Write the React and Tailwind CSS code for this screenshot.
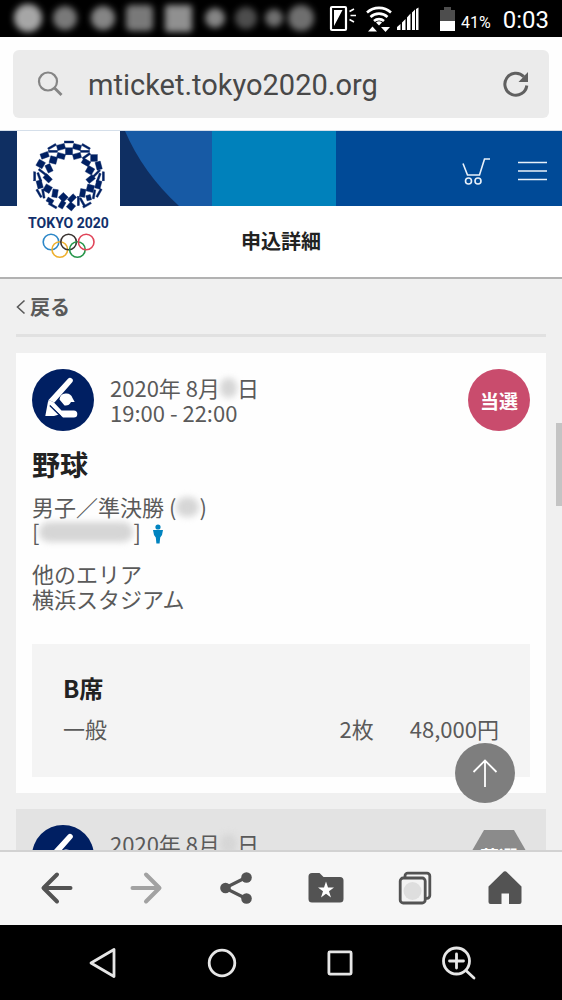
const SMUDGES = [
  { x: 28, r: 14, o: 0.75 },
  { x: 65, r: 12, o: 0.55 },
  { x: 103, r: 12, o: 0.6 },
  { x: 215, r: 10, o: 0.6 },
  { x: 246, r: 11, o: 0.35 },
  { x: 274, r: 9, o: 0.5 },
  { x: 301, r: 13, o: 0.5 },
];

// [centre x, centre y, width, height, rotation]
const TILES = [
  [205, 51, 28, 6, 0], [205, 79, 21, 21, 0], [181, 66, 24, 16, -15], [229, 66, 24, 16, 15],
  [154, 65, 27, 6, -30], [157, 79, 27, 6, 0], [256, 65, 27, 6, 30], [253, 79, 27, 6, 0],
  [132, 91, 24, 16, -20], [158, 105, 21, 21, 15], [181, 93, 24, 16, 15], [229, 93, 24, 16, -15],
  [257, 93, 27, 6, -35], [280, 99, 20, 20, 0], [256, 112, 24, 16, 30],
  [120, 117, 21, 21, 30], [145, 130, 24, 16, 65], [294, 122, 24, 16, 75], [268, 136, 21, 21, 30],
  [102, 154, 6, 27, 0], [116, 156, 6, 27, -20], [125, 141, 27, 6, 38], [141, 160, 24, 16, 45],
  [308, 154, 6, 27, 0], [294, 158, 6, 27, 20], [288, 145, 6, 27, 45], [270, 162, 24, 16, -40],
  [117, 178, 16, 24, -15], [141, 191, 21, 21, 30], [115, 205, 6, 27, -30], [128, 206, 6, 27, -10],
  [293, 179, 16, 24, 15], [269, 190, 21, 21, 15], [295, 204, 6, 27, 30], [280, 208, 6, 27, 10],
  [163, 205, 16, 24, 10], [148, 227, 20, 13, 30], [188, 217, 21, 21, 45], [156, 242, 27, 6, 30],
  [184, 239, 22, 15, -60], [211, 244, 20, 20, 40], [214, 220, 24, 15, -45], [233, 228, 6, 28, 0],
  [246, 204, 16, 24, 10], [245, 231, 6, 27, -30], [259, 240, 27, 6, -30], [264, 218, 14, 16, -15],
];

function Emblem() {
  return (
    <svg viewBox="97 45 216 216" className="block h-[72px] w-[72px]" fill="#002063" stroke="#002063" strokeWidth="1.200" aria-hidden="true">
      {TILES.map(([x, y, w, h, a], i) => (
        <rect key={i} x={x - w / 2} y={y - h / 2} width={w} height={h} transform={`rotate(${a} ${x} ${y})`} />
      ))}
    </svg>
  );
}

function Rings() {
  return (
    <svg viewBox="0 0 54 26" className="block h-[26px] w-[54px]" fill="none" strokeWidth="1.600" aria-hidden="true">
      <circle cx="9" cy="9" r="7.800" stroke="#2c87c8" />
      <circle cx="17.800" cy="16.500" r="7.800" stroke="#efb02e" />
      <circle cx="26.600" cy="9" r="7.800" stroke="#3a3330" />
      <circle cx="35.400" cy="16.500" r="7.800" stroke="#26964a" />
      <circle cx="44.200" cy="9" r="7.800" stroke="#e04458" />
    </svg>
  );
}

function StatusBar() {
  return (
    <div className="flex h-[37px] shrink-0 items-center bg-black pr-[13px] text-white">
      <svg viewBox="0 0 316 37" className="h-[37px] w-[316px] shrink-0 overflow-visible" aria-hidden="true">
        <defs>
          <filter id="soft" x="-30%" y="-30%" width="160%" height="160%">
            <feGaussianBlur stdDeviation="3.2" />
          </filter>
        </defs>
        <g filter="url(#soft)" fill="#ddd">
          {SMUDGES.map((s) => (
            <circle key={s.x} cx={s.x} cy="18" r={s.r} opacity={s.o} />
          ))}
          <rect x="126" y="5" width="27" height="26" rx="5" opacity=".55" />
          <rect x="165" y="5" width="27" height="27" rx="3" opacity=".65" />
        </g>
      </svg>
      <svg viewBox="0 0 134 37" className="ml-auto h-[37px] w-[134px] shrink-0" aria-hidden="true">
        <rect x="8" y="7" width="15" height="23" rx="1" fill="none" stroke="#fff" strokeWidth="2.200" />
        <path d="M11 10h8.500L11 26z" fill="#fff" />
        <path d="M26.500 11.500l4.500-2.500M27.500 15.500h5.500M26.500 19.500l4.500 2.500" stroke="#fff" strokeWidth="1.600" />
        <g fill="none" stroke="#fff" strokeWidth="2.600">
          <path d="M44 12.500a18 18 0 0 1 24 0" />
          <path d="M47.500 17a12.500 12.500 0 0 1 17 0" />
          <path d="M51 21a7.500 7.500 0 0 1 10 0" />
        </g>
        <path d="M53 22.500a4.500 4.500 0 0 1 6 0l-3 3z" fill="#fff" />
        <path d="M45 31.500l4.500-5 4.500 5zM58 27h9l-4.500 5z" fill="#fff" />
        <path d="M74 30V27l3.500-3v6zM79 30v-7.500l3.500-3.500v11zM84 30V17.500l3.500-4V30zM89 30V12.500l3-3V30zM93 30V9l2.500-1.500V30z" fill="#fff" />
        <path d="M117 10h4V7h7v3h4v11h-15z" fill="#4d4d4d" />
        <path d="M117 21h15v10h-15z" fill="#fff" />
      </svg>
      <span className="ml-1 mt-2 font-['Roboto',sans-serif] text-[16px] leading-none">41%</span>
      <span className="ml-3 mt-[2px] font-['Roboto',sans-serif] text-[24px] leading-none">0:03</span>
    </div>
  );
}

function AddressBar() {
  return (
    <div className="shrink-0 border-b border-[#d5dfea] bg-[#fefefe] px-[13px] pt-[13px] pb-3">
      <div className="flex h-[68px] items-center rounded-md bg-[#ebebeb] pr-5 pl-6">
        <svg viewBox="0 0 26 26" className="h-[26px] w-[26px] shrink-0" fill="none" stroke="#858585" strokeWidth="2.200" aria-hidden="true">
          <circle cx="11" cy="10.500" r="9" />
          <path d="M17.500 17l7 7" strokeWidth="2.800" />
        </svg>
        <input
          aria-label="URL"
          defaultValue="mticket.tokyo2020.org"
          className="ml-[25px] min-w-0 flex-1 bg-transparent pt-1 font-['Roboto',sans-serif] text-[29px] text-[#484848] outline-none"
        />
        <button type="button" aria-label="再読み込み" className="shrink-0">
          <svg viewBox="0 0 26 26" className="block h-[26px] w-[26px]" aria-hidden="true">
            <path d="M20.800 5.600A11 11 0 1 0 23.800 14.500" fill="none" stroke="#606060" strokeWidth="3" />
            <path d="M25 1v10H15.500z" fill="#606060" />
          </svg>
        </button>
      </div>
    </div>
  );
}

function SiteHeader() {
  return (
    <header className="relative shrink-0 border-b-2 border-[#b2b2b2] bg-white">
      <div className="flex h-[75px] bg-[#004a97]">
        <svg viewBox="0 0 212 75" className="h-[75px] w-[212px] shrink-0" aria-hidden="true">
          <path d="M0 0h212v75H0z" fill="#0f2f62" />
          <path d="M125 0H212V75H179Q143 42 125 0z" fill="#175aa5" />
        </svg>
        <div className="w-[124px] shrink-0 bg-[#0081bb]" />
        <div className="flex flex-1 items-center justify-end gap-[26px] pr-[15px]">
          <button type="button" aria-label="カート" className="mt-1">
            <svg viewBox="0 0 30 30" className="block h-[30px] w-[30px]" fill="none" stroke="#e8f1fa" strokeWidth="1.600" aria-hidden="true">
              <path d="M2 7.500L6.500 19H18.500L23.500 3H29" />
              <circle cx="7.500" cy="25" r="3" />
              <circle cx="17" cy="25" r="3" />
            </svg>
          </button>
          <button type="button" aria-label="メニュー" className="mt-1">
            <svg viewBox="0 0 30 20" className="block h-5 w-[30px]" stroke="#e8f1fa" strokeWidth="1.600" aria-hidden="true">
              <path d="M1 1.500h29M1 10h29M1 18.500h29" />
            </svg>
          </button>
        </div>
      </div>
      <h1 className="flex h-[71px] items-center justify-center pb-[2px] text-[20px] font-bold text-[#222]">申込詳細</h1>
      <a href="#top" className="absolute top-0 left-[17px] flex h-[135px] w-[103px] flex-col items-center bg-white pt-[9px]">
        <Emblem />
        <span className="mt-[2px] font-['Roboto',sans-serif] text-[14px] leading-[18px] font-bold whitespace-nowrap text-[#12306c]">TOKYO 2020</span>
        <span className="mt-px">
          <Rings />
        </span>
      </a>
    </header>
  );
}

function BaseballIcon() {
  return (
    <svg viewBox="0 0 62 62" className="h-[62px] w-[62px] shrink-0" aria-hidden="true">
      <circle cx="31" cy="31" r="31" fill="#001f62" />
      <path d="M36 9.800a2.700 2.700 0 0 1 4.200 3.400L22.500 33.500 16.500 31z" fill="#fff" />
      <path d="M27.500 30.500a6.700 6.700 0 0 1 13-1.500l2.200 4H39a6.200 6.200 0 0 1-6.500 3.500z" fill="#fff" />
      <path d="M16.500 31l5 2 8 8.500h12.300a3.400 3.400 0 0 1 0 7H31L17 35.500z" fill="#fff" />
      <path d="M16.300 31L18 36.500 27 45.500 22 47h-8.700z" fill="#fff" />
      <path d="M17.800 36.500L28.500 47" stroke="#001f62" strokeWidth="1.200" />
    </svg>
  );
}

function Redacted({ className }) {
  return <span aria-hidden="true" className={`inline-block shrink-0 rounded-full bg-[#d6d6d6] blur-[3px] ${className}`} />;
}

function SessionHead({ end, children }) {
  return (
    <div className="flex items-center gap-4">
      <BaseballIcon />
      <div className="flex-1">
        <p className="flex h-[25px] items-center">
          2020年 8月
          <Redacted className="h-5 w-[17px]" />日
        </p>
        <p>19:00 - {end}</p>
      </div>
      {children}
    </div>
  );
}

function Toolbar() {
  const cell = "flex items-center justify-center";
  return (
    <nav aria-label="ブラウザ" className="grid h-[75px] shrink-0 grid-cols-6 border-t-2 border-[#d2d2d2] bg-[#f6f6f6] px-3 pb-[2px] text-[#535353]">
      <button type="button" aria-label="戻る" className={cell}>
        <svg viewBox="0 0 34 34" className="h-[34px] w-[34px]" fill="none" stroke="currentColor" strokeWidth="4" strokeLinecap="round" strokeLinejoin="round">
          <path d="M30.500 17H4M17 3.500L3.500 17 17 30.500" />
        </svg>
      </button>
      <button type="button" aria-label="進む" className={cell}>
        <svg viewBox="0 0 34 34" className="h-[34px] w-[34px]" fill="none" stroke="#a2a2a2" strokeWidth="4" strokeLinecap="round" strokeLinejoin="round">
          <path d="M3.500 17H30M17 3.500L30.500 17 17 30.500" />
        </svg>
      </button>
      <button type="button" aria-label="共有" className={cell}>
        <svg viewBox="0 0 34 34" className="h-[34px] w-[34px]" fill="currentColor">
          <path d="M27 6.500L6 17l21 10.500" fill="none" stroke="currentColor" strokeWidth="3.200" />
          <circle cx="6.500" cy="17" r="5.300" />
          <circle cx="27.500" cy="6.500" r="5.300" />
          <circle cx="27.500" cy="27.500" r="5.300" />
        </svg>
      </button>
      <button type="button" aria-label="ブックマーク" className={cell}>
        <svg viewBox="0 0 36 32" className="h-8 w-9">
          <path d="M4 1h7.500l4 4H32a3.500 3.500 0 0 1 3.500 3.500V27a3.500 3.500 0 0 1-3.500 3.500H4A3.500 3.500 0 0 1 .5 27V4.500A3.500 3.500 0 0 1 4 1z" fill="currentColor" />
          <path d="M18 9.500l2 6h6l-5 3.700 2 6.300-5-3.800-5 3.800 2-6.300-5-3.700h6z" fill="#fff" />
        </svg>
      </button>
      <button type="button" aria-label="タブ" className={cell}>
        <svg viewBox="0 0 34 34" className="h-[34px] w-[34px]" fill="none" stroke="currentColor" strokeWidth="2.800">
          <path d="M7 6.500V5a2.800 2.800 0 0 1 2.800-2.800H29A2.800 2.800 0 0 1 31.800 5v19.500A2.800 2.800 0 0 1 29 27.300h-1" />
          <rect x="2.200" y="7" width="25" height="25" rx="3" fill="#f3f3f3" />
          <circle cx="14.500" cy="20" r="9" fill="#dedede" stroke="none" />
        </svg>
      </button>
      <button type="button" aria-label="ホーム" className={cell}>
        <svg viewBox="0 0 34 34" className="h-[34px] w-[34px]" fill="currentColor">
          <path d="M14.800 1.500a3 3 0 0 1 4.400 0L33.500 15.500V31a2 2 0 0 1-2 2H21V22.500h-7.500V33H2.500a2 2 0 0 1-2-2V15.500z" />
        </svg>
      </button>
    </nav>
  );
}

function SystemNav() {
  const cell = "flex items-center justify-center";
  return (
    <nav aria-label="システム" className="grid h-[75px] shrink-0 grid-cols-4 bg-black px-11 text-[#e6e6e6]">
      <button type="button" aria-label="バック" className={cell}>
        <svg viewBox="0 0 34 34" className="h-[34px] w-[34px]" fill="none" stroke="currentColor" strokeWidth="2.800" strokeLinejoin="round">
          <path d="M28 3.500v27L5 17z" />
        </svg>
      </button>
      <button type="button" aria-label="ホーム画面" className={cell}>
        <svg viewBox="0 0 34 34" className="h-[34px] w-[34px]" fill="none" stroke="currentColor" strokeWidth="2.800">
          <circle cx="17" cy="17" r="12.800" />
        </svg>
      </button>
      <button type="button" aria-label="アプリ履歴" className={cell}>
        <svg viewBox="0 0 34 34" className="h-[34px] w-[34px]" fill="none" stroke="currentColor" strokeWidth="2.800">
          <rect x="5.900" y="5.900" width="22.200" height="22.200" rx="1" />
        </svg>
      </button>
      <button type="button" aria-label="拡大" className={cell}>
        <svg viewBox="0 0 34 34" className="h-[34px] w-[34px]" fill="none" stroke="currentColor" strokeWidth="2.800" strokeLinecap="round">
          <circle cx="14.500" cy="15" r="13" />
          <path d="M14.500 8v14M7.500 15h14M24.500 25l7.500 7" />
        </svg>
      </button>
    </nav>
  );
}

export default function App() {
  return (
    <div className="flex h-screen flex-col overflow-hidden bg-[#f0f0f0] font-['Noto_Sans_CJK_JP',sans-serif]">
      <StatusBar />
      <AddressBar />
      <SiteHeader />
      <div className="relative min-h-0 flex-1">
        <main className="h-full overflow-hidden px-4 text-[22px] leading-[25px] text-[#5a5a5a]">
          <a href="#back" className="flex items-center gap-1 border-b-[3px] border-[#e1e1e1] pt-[14px] pb-[13px] text-[20px] leading-7 font-bold">
            <svg viewBox="0 0 10 16" className="h-4 w-[10px]" fill="none" stroke="currentColor" strokeWidth="1.600" aria-hidden="true">
              <path d="M8.500 1.500L1.500 8l7 6.500" />
            </svg>
            戻る
          </a>
          <article className="mt-4 bg-[#fefefe] p-4">
            <SessionHead end="22:00">
              <span className="flex h-[62px] w-[62px] items-center justify-center rounded-full bg-[#c94c6d] text-[19px] font-bold text-white">当選</span>
            </SessionHead>
            <h2 className="mt-3 text-[28px] leading-[42px] font-bold text-[#222]">野球</h2>
            <div className="mt-[9px]">
              <p className="flex h-[25px] items-center">
                男子／準決勝 (<Redacted className="h-5 w-[23px]" />)
              </p>
              <p className="flex h-[25px] items-center">
                [<Redacted className="h-5 w-[94px]" />]
                <svg viewBox="0 0 10 20" className="mt-1 ml-3 h-5 w-[10px]" fill="#0083bf" role="img" aria-label="男子">
                  <circle cx="5" cy="3" r="2.600" />
                  <path d="M0 6h10L9 11 7.200 13.500l-.6 6H3.400l-.6-6L1 11z" />
                </svg>
              </p>
            </div>
            <p className="mt-[17px]">
              他のエリア
              <br />
              横浜スタジアム
            </p>
            <section className="mt-[33px] bg-[#f4f4f4] px-[31px] pt-[31px] pb-9">
              <h3 className="text-[24px] leading-[26px] font-bold text-[#222]">B席</h3>
              <div className="mt-[15px] flex">
                <span className="flex-1">一般</span>
                <span>2枚</span>
                <span className="ml-9">48,000円</span>
              </div>
            </section>
          </article>
          <article className="mt-4 bg-[#e3e3e3] p-4">
            <SessionHead end="22:00">
              <span className="relative flex h-[62px] w-[62px] items-center justify-center text-[19px] font-bold text-white">
                <svg viewBox="0 0 62 62" className="absolute inset-0" fill="#8b8b8b" aria-hidden="true">
                  <path d="M16 5h30l15 26-15 26H16L1 31z" />
                </svg>
                <span className="relative">落選</span>
              </span>
            </SessionHead>
          </article>
        </main>
        <div className="absolute top-[144px] right-0 h-[83px] w-[6px] bg-[#c4c4c4]" />
        <button type="button" aria-label="ページの先頭へ" className="absolute right-[47px] bottom-[47px] flex h-[60px] w-[60px] items-center justify-center rounded-full bg-[#7e7e7e]">
          <svg viewBox="0 0 26 28" className="h-7 w-[26px]" fill="none" stroke="#fff" strokeWidth="1.800" aria-hidden="true">
            <path d="M13 28V1.500M1.500 13L13 1.500 24.500 13" />
          </svg>
        </button>
      </div>
      <Toolbar />
      <SystemNav />
    </div>
  );
}
